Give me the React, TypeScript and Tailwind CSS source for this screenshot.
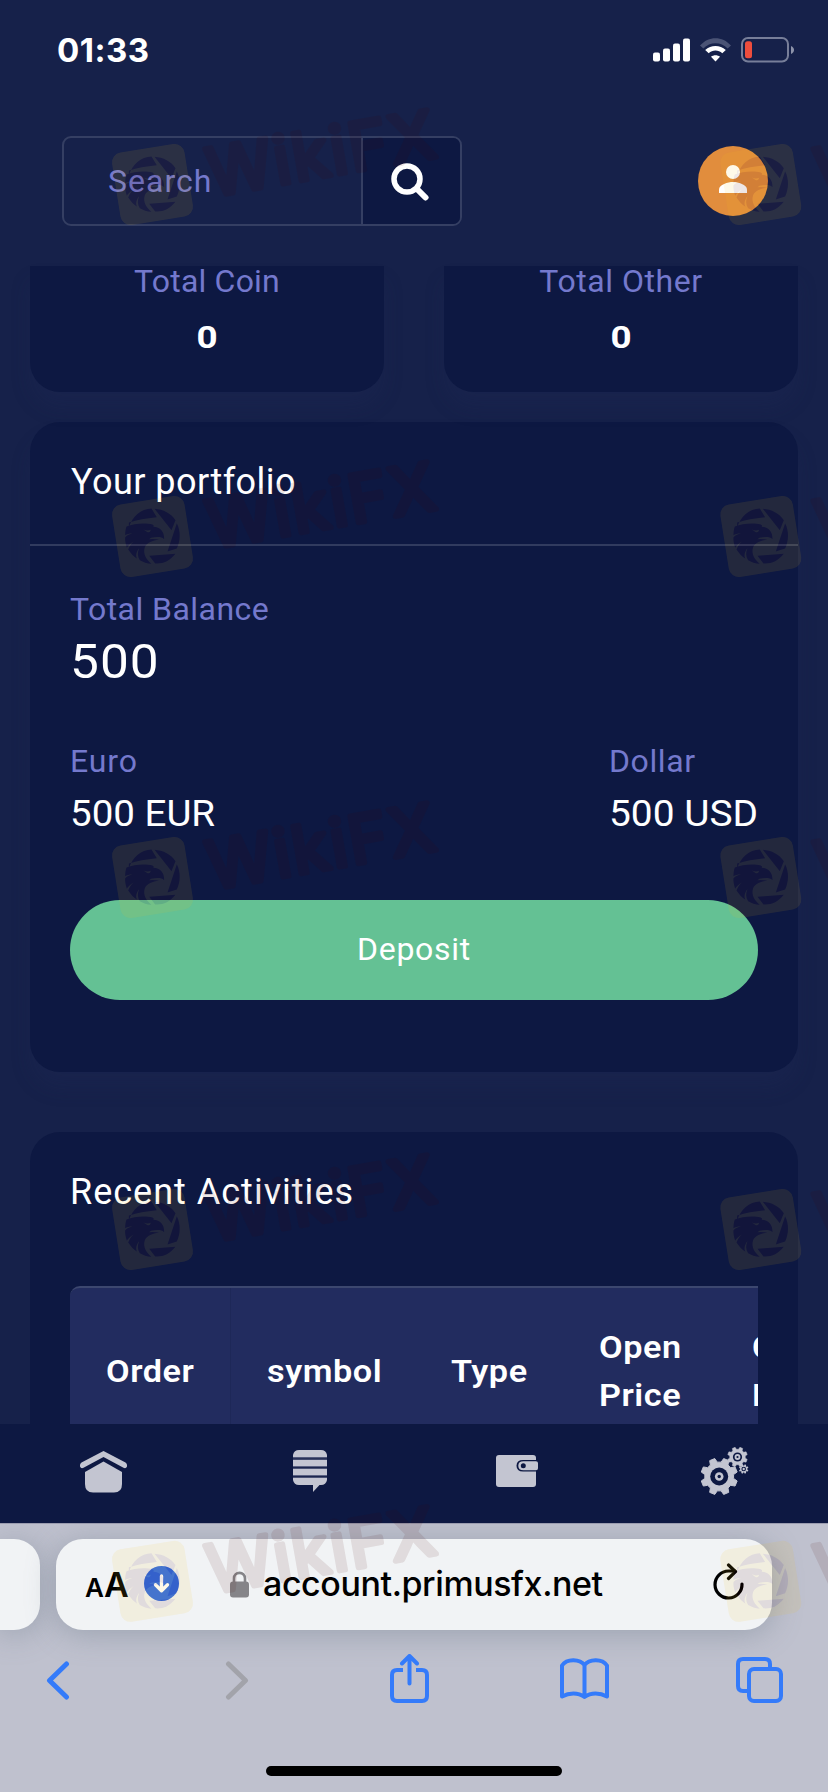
import React from "react";

const rubik = "font-['Roboto','Noto_Sans',sans-serif]";
const system = "font-['Inter','Liberation_Sans',sans-serif]";

function StatusBar() {
  return (
    <div className={`flex h-[100px] items-center justify-between pl-[57px] pr-[33px] ${system}`}>
      <span className="text-[33px] font-bold leading-none tracking-[0.5px] text-white">01:33</span>
      <div className="flex items-center">
        <svg width="38" height="24" viewBox="0 0 38 24" fill="#fff">
          <rect x="0" y="14.5" width="7" height="9" rx="2" />
          <rect x="10" y="10.5" width="7" height="13" rx="2" />
          <rect x="20" y="5.500" width="7" height="18" rx="2" />
          <rect x="30" y="0.500" width="7" height="23" rx="2" />
        </svg>
        <svg className="ml-[9px]" width="31" height="24" viewBox="0 0 31 24">
          <path d="M0 7.500 C8.500 -2.300 22.500 -2.300 31 7.500 L27.700 10.500 C21 3.500 10 3.500 3.300 10.500 Z" fill="#4a5375" />
          <path d="M5.200 12 C11 6.600 20 6.600 25.800 12 L22.300 15.300 C18.500 11.600 12.500 11.600 8.700 15.300 Z" fill="#fff" />
          <path d="M11 18.700 C13.600 16.700 17.400 16.700 20 18.700 L15.500 23.500 Z" fill="#fff" />
        </svg>
        <svg className="ml-[10px]" width="54" height="26" viewBox="0 0 54 26">
          <rect x="1" y="1" width="46" height="23.500" rx="6" fill="none" stroke="#777e99" strokeWidth="2" />
          <rect x="4" y="4.300" width="7" height="17" rx="2.500" fill="#ee4d3d" />
          <path d="M50 9 C54 10.500 54 15.500 50 17 Z" fill="#8d93aa" />
        </svg>
      </div>
    </div>
  );
}

function Header() {
  return (
    <div className="flex h-[166px] items-start justify-between pl-[62px] pr-[60px] pt-[36px]">
      <div className="flex h-[90px] w-[400px] overflow-hidden rounded-[9px] border-2 border-[#353f63]">
        <div className="flex w-[297px] items-center pl-[44px]">
          <span className="text-[32px] leading-[40px] tracking-[1px] text-[#7479cd]">Search</span>
        </div>
        <div className="flex flex-1 items-center justify-center border-l-2 border-[#353f63] bg-[#0d1842] pr-[3px]">
          <svg className="mt-px" width="38" height="38" viewBox="0 0 38 38" fill="none" stroke="#fff" strokeLinecap="round">
            <circle cx="16" cy="16" r="13" strokeWidth="5.500" />
            <path d="M26 26 L34.500 34.500" strokeWidth="6" />
          </svg>
        </div>
      </div>
      <div className="mt-[10px] flex size-[70px] items-center justify-center rounded-full bg-[#e18d3d]">
        <svg className="-mt-[4px]" width="28" height="28" viewBox="0 0 28 28" fill="#fff">
          <circle cx="14" cy="7" r="7" />
          <path d="M0 28 V24.500 C0 19.500 9 17 14 17 S28 19.500 28 24.500 V28 Z" />
        </svg>
      </div>
    </div>
  );
}

function TotalCard({ label, tracking }: { label: string; tracking: string }) {
  return (
    <div className="h-[126px] w-[354px] rounded-b-[30px] bg-[#0d1842] text-center text-[32px] shadow-[0_16px_20px_rgba(34,46,88,0.2)]">
      <p className={`-mt-1 leading-[38px] text-[#7479cd] ${tracking}`}>{label}</p>
      <p className="mt-[16px] scale-x-115 leading-[42px] font-bold text-white">0</p>
    </div>
  );
}

function Portfolio() {
  return (
    <section className="mx-[30px] mt-[30px] h-[650px] rounded-[30px] bg-[#0d1842] shadow-[0_16px_20px_rgba(34,46,88,0.2)]">
      <div className="flex h-[124px] items-center border-b-2 border-[#313b5f] pl-[41px]">
        <h2 className="-mt-[2px] text-[36px] leading-[44px] tracking-[0.450px] text-white">Your portfolio</h2>
      </div>
      <div className="px-10 pt-[38px]">
        <p className="text-[32px] leading-[50px] tracking-[0.45px] text-[#7479cd]">Total Balance</p>
        <p className="origin-left scale-x-107 text-[48px] leading-[56px] tracking-[1px] text-white">500</p>
        <div className="mt-[46px] flex justify-between">
          <div className="w-[148px]">
            <p className="text-[32px] leading-[50px] tracking-[0.9px] text-[#7479cd]">Euro</p>
            <p className="origin-left scale-x-107 text-[36px] leading-[56px] text-white">500 EUR</p>
          </div>
          <div className="w-[149px]">
            <p className="text-[32px] leading-[50px] tracking-[0.6px] text-[#7479cd]">Dollar</p>
            <p className="origin-left scale-x-108 text-[36px] leading-[56px] text-white">500 USD</p>
          </div>
        </div>
        <button className="mt-[58px] flex h-[100px] w-full items-center justify-center rounded-full bg-[#64c194] pb-[2px] text-[32px] tracking-[0.7px] text-white">
          Deposit
        </button>
      </div>
    </section>
  );
}

const columns = [
  { label: ["Order"], width: "w-[161px]", edge: "border-[#1e2858]" },
  { label: ["symbol"], width: "w-[184px]", edge: "border-transparent" },
  { label: ["Type"], width: "w-[148px]", edge: "border-transparent" },
  { label: ["Open", "Price"], width: "w-[153px]", edge: "border-transparent" },
  { label: ["Close", "Price"], width: "w-[153px]", edge: "border-transparent" },
];

function Activities() {
  return (
    <section className="mx-[30px] mt-[60px] h-[292px] rounded-t-[30px] bg-[#0d1842] px-10 pt-[38px]">
      <h2 className="text-[36px] leading-[44px] tracking-[1px] text-white">Recent Activities</h2>
      <div className="mt-[72px] h-[138px] overflow-hidden rounded-tl-[10px] border-t-2 border-[#3c476f] bg-[#222c5f]">
        <div className="flex h-[166px] w-[800px]">
          {columns.map((column, index) => (
            <div
              key={index}
              className={`flex shrink-0 flex-col justify-center border-r pl-9 text-[32px] font-semibold leading-[48px] tracking-[0.5px] text-white ${column.width} ${column.edge}`}
            >
              {column.label.map((line) => (
                <span key={line} className="origin-left scale-x-107">
                  {line}
                </span>
              ))}
            </div>
          ))}
        </div>
      </div>
    </section>
  );
}

function gearPath(cx: number, cy: number, outer: number, inner: number, teeth: number) {
  const step = (Math.PI * 2) / teeth;
  const points: string[] = [];
  for (let i = 0; i < teeth; i++) {
    const a = i * step + step / 2;
    const corners: [number, number][] = [
      [inner, -0.33],
      [outer, -0.19],
      [outer, 0.19],
      [inner, 0.33],
    ];
    corners.forEach(([r, t]) => {
      points.push(`${(cx + r * Math.cos(a + t * step)).toFixed(2)} ${(cy + r * Math.sin(a + t * step)).toFixed(2)}`);
    });
  }
  return `M${points.join("L")}Z`;
}

function NavBar() {
  return (
    <nav className="flex h-[99px] shrink-0 items-start bg-[#0d1842]">
      <svg className="ml-[80px] mt-[27px]" width="47" height="42" viewBox="0 0 47 42" fill="#c3c5d1">
        <path d="M23.500 0 L45.500 11.500 Q47 12.500 47 14 V15.500 Q46 18 43.500 16.800 L23.500 6 L3.500 16.800 Q1 18 0 15.500 V14 Q0 12.500 1.500 11.500 Z" />
        <path d="M23.500 10.500 L42 21 V33 Q42 41.500 34 41.500 H13 Q5 41.500 5 33 V21 Z" />
      </svg>
      <svg className="ml-[166px] mt-[26px]" width="34" height="43" viewBox="0 0 34 43" fill="#c3c5d1">
        <path d="M0 7 V5 Q1 0 6 0 H28 Q33 0 34 5 V7 Z" />
        <rect y="10" width="34" height="6" />
        <rect y="19" width="34" height="6" />
        <path d="M0 28 H34 V30 Q33 35 28 35 H26.500 L20 42 V35 H6 Q1 35 0 30 Z" />
        <path d="M0 7.600 H34 M0 9.200 H34 M0 16.500 H34 M0 18.300 H34 M0 25.500 H34 M0 27.300 H34" stroke="#5b6283" strokeWidth="1" />
      </svg>
      <svg className="ml-[169px] mt-[31px]" width="42" height="32" viewBox="0 0 42 32">
        <rect width="40" height="32" rx="3" fill="#c3c5d1" />
        <path d="M42 5 H27 Q20.500 5 20.500 10.700 Q20.500 16.500 27 16.500 H42 Z" fill="#0d1842" />
        <path d="M40 6.300 H27.500 Q22.300 6.300 22.300 10.700 Q22.300 15.200 27.500 15.200 H40 Q42 15.200 42 13.200 V8.300 Q42 6.300 40 6.300 Z" fill="#c3c5d1" />
        <circle cx="27.300" cy="10.700" r="2.500" fill="#0d1842" />
      </svg>
      <svg className="ml-[163px] mt-[23px]" width="48" height="49" viewBox="0 0 48 49" fill="#c3c5d1">
        <path d={gearPath(18.2, 29.5, 18.5, 14.5, 8)} stroke="#c3c5d1" strokeWidth="1" strokeLinejoin="round" />
        <circle cx="18.200" cy="29.500" r="9" fill="#0d1842" />
        <circle cx="18.200" cy="29.500" r="4.300" />
        <circle cx="18.200" cy="29.500" r="1.700" fill="#0d1842" />
        <path d={gearPath(36.5, 10, 10, 7.8, 8)} stroke="#c3c5d1" strokeWidth="0.500" strokeLinejoin="round" />
        <circle cx="36.500" cy="10" r="4.600" fill="#0d1842" />
        <circle cx="36.500" cy="10" r="2.900" />
        <circle cx="36.500" cy="10" r="1.100" fill="#0d1842" />
        <path d={gearPath(42.7, 22, 4.8, 3.6, 8)} />
        <circle cx="42.700" cy="22" r="2.300" fill="#0d1842" />
        <circle cx="42.700" cy="22" r="1.200" />
      </svg>
    </nav>
  );
}

function Safari() {
  return (
    <footer className={`h-[269px] shrink-0 overflow-hidden border-t border-[#9a9caf] bg-[#bfc1ce] ${system}`}>
      <div className="flex pt-[15px]">
        <div className="h-[91px] w-[40px] rounded-r-[26px] bg-[#f1f3f5] shadow-[0_4px_30px_rgba(100,115,130,0.4)]" />
        <div className="ml-4 flex h-[91px] w-[716px] items-start rounded-[27px] bg-[#f1f3f5] shadow-[0_4px_30px_rgba(100,115,130,0.4)]">
          <div className="ml-[29px] flex h-[91px] w-[52px] items-baseline pt-[29px] font-semibold leading-none text-black">
            <span className="w-[19px] text-[26px]">A</span>
            <span className="text-[34px]">A</span>
          </div>
          <svg className="ml-[7px] mt-[27px]" width="35" height="35" viewBox="0 0 35 35">
            <circle cx="17.500" cy="17.500" r="17.500" fill="#326ce2" />
            <path d="M17.500 10 V24.500 M11.500 18.800 L17.500 24.800 L23.500 18.800" fill="none" stroke="#fff" strokeWidth="3.400" strokeLinecap="round" strokeLinejoin="round" />
          </svg>
          <svg className="ml-[51px] mt-[32px]" width="19" height="27" viewBox="0 0 19 27">
            <path d="M4 12 V7.500 C4 0 15 0 15 7.500 V12" fill="none" stroke="#858488" strokeWidth="2.600" />
            <rect y="10.500" width="19" height="16" rx="3" fill="#858488" />
          </svg>
          <span className="ml-[14px] mt-[24px] w-[450px] text-[34px] font-medium leading-[42px] tracking-[-0.420px] text-black">
            account.primusfx.net
          </span>
          <svg className="mt-[24px]" width="32" height="38" viewBox="0 0 32 38" fill="none" stroke="#000" strokeWidth="3.200" strokeLinecap="round" strokeLinejoin="round">
            <path d="M29 21 A13.500 13.500 0 1 1 15.500 8 H22" />
            <path d="M15.500 2 L22.500 8.700 L15.500 15.500" />
          </svg>
        </div>
      </div>
      <div className="flex h-[136px] items-start text-[#347bfa]">
        <svg className="ml-[46px] mt-[31px]" width="24" height="39" viewBox="0 0 24 39" fill="none" stroke="currentColor" strokeWidth="5" strokeLinecap="round" strokeLinejoin="round">
          <path d="M20.500 3 L3.500 19.500 L20.500 36" />
        </svg>
        <svg className="ml-[155px] mt-[31px]" width="24" height="39" viewBox="0 0 24 39" fill="none" stroke="#a2a3aa" strokeWidth="5" strokeLinecap="round" strokeLinejoin="round">
          <path d="M3.500 3 L20.500 19.500 L3.500 36" />
        </svg>
        <svg className="ml-[141px] mt-[24px]" width="39" height="50" viewBox="0 0 39 50" fill="none" stroke="currentColor" strokeWidth="4" strokeLinecap="round" strokeLinejoin="round">
          <path d="M13 16 H7 Q2 16 2 21 V42 Q2 47 7 47 H32 Q37 47 37 42 V21 Q37 16 32 16 H26" strokeLinecap="butt" />
          <path d="M19.500 29.500 V3 M12 9.500 L19.500 2 L27 9.500" />
        </svg>
        <svg className="ml-[131px] mt-[28px]" width="49" height="43" viewBox="0 0 49 43" fill="none" stroke="currentColor" strokeWidth="4" strokeLinecap="round" strokeLinejoin="round">
          <path d="M24.500 7 C20 1 7 0 2 7.500 V38.500 C9 34.500 18 34 24.500 39 C31 34 40 34.500 47 38.500 V7.500 C42 0 29 1 24.500 7 V39" />
        </svg>
        <svg className="ml-[127px] mt-[27px]" width="47" height="47" viewBox="0 0 47 47" fill="none" stroke="currentColor" strokeWidth="4">
          <path d="M11.500 34 H7 Q2 34 2 29 V7 Q2 2 7 2 H29 Q34 2 34 7 V11" />
          <rect x="13" y="12" width="32" height="32" rx="5" />
        </svg>
      </div>
      <div className="mx-auto h-[10px] w-[296px] rounded-full bg-black" />
    </footer>
  );
}

function Emblem({ x, y }: { x: number; y: number }) {
  return (
    <g transform={`translate(${x} ${y}) scale(0.3333)`}>
      <rect x="-110" y="-110" width="220" height="220" rx="30" fill="#f5c31a" transform="rotate(-9)" />
      <g fill="#4a0505">
        <path d="M-71 -25 C-61 -60 -35 -82 -3 -83 L13 -57 C-20 -54 -45 -49 -71 -41 Z" transform="translate(0 -1)" />
        <path d="M6 -83 C33 -81 55 -69 69 -49 L57 -19 Z" />
        <path d="M73 -40 C85 -16 84 12 73 36 L45 45 Z" />
        <path d="M69 52 C52 74 30 83 8 81 L-10 58 Z" />
        <path d="M-78 -30 C-55 -40 -20 -41 0 -36 Q6 -33 3 -29 C23 -28 36 -14 35 8 C25 -1 10 2 -4 4 L-10 8 Q5 7 20 9 C0 12 -17 18 -23 32 C-30 53 -17 70 -3 82 C-17 81 -28 77 -38 71 C-45 60 -46 48 -40 35 C-49 45 -51 59 -46 67 C-56 61 -65 51 -73 39 C-68 28 -65 22 -57 15 C-68 22 -75 29 -77 34 C-81 21 -83 11 -82 2 C-76 -5 -68 -7 -60 -10 C-70 -9 -77 -8 -82 -4 C-82 -13 -81 -22 -78 -30 Z" />
      </g>
      <path d="M-27 -21 Q-15 -15 -5 -20 Q-8 -9 -17 -14 Z" fill="#f5c31a" />
    </g>
  );
}

function Watermark() {
  const rows = [184.5, 536.5, 877.5, 1229.5, 1581.3];
  return (
    <svg className="pointer-events-none absolute inset-0" width="828" height="1792" viewBox="0 0 828 1792">
      <g opacity="0.1">
        {rows.map((y) =>
          [152.5, 760.8].map((x) => (
            <g key={`${x}-${y}`}>
              <Emblem x={x} y={y} />
              <text
                transform={`translate(${x + 59} ${y + 12}) rotate(-10)`}
                textLength="230"
                lengthAdjust="spacing"
                fontFamily="Inter, sans-serif"
                fontWeight="400"
                fontSize="66"
                fill="#4a0505"
                stroke="#4a0505"
                strokeWidth="5.5"
                strokeLinejoin="round"
              >
                WikiFX
              </text>
            </g>
          )),
        )}
      </g>
    </svg>
  );
}

export default function App() {
  return (
    <div className={`relative flex h-[1792px] w-[828px] flex-col overflow-hidden bg-[#16214a] ${rubik}`}>
      <div className="h-[266px] shrink-0">
        <StatusBar />
        <Header />
      </div>
      <main className="h-[1158px] shrink-0">
        <div className="flex justify-between px-[30px]">
          <TotalCard label="Total Coin" tracking="tracking-[0.2px]" />
          <TotalCard label="Total Other" tracking="tracking-[0.55px]" />
        </div>
        <Portfolio />
        <Activities />
      </main>
      <NavBar />
      <Safari />
      <Watermark />
    </div>
  );
}
